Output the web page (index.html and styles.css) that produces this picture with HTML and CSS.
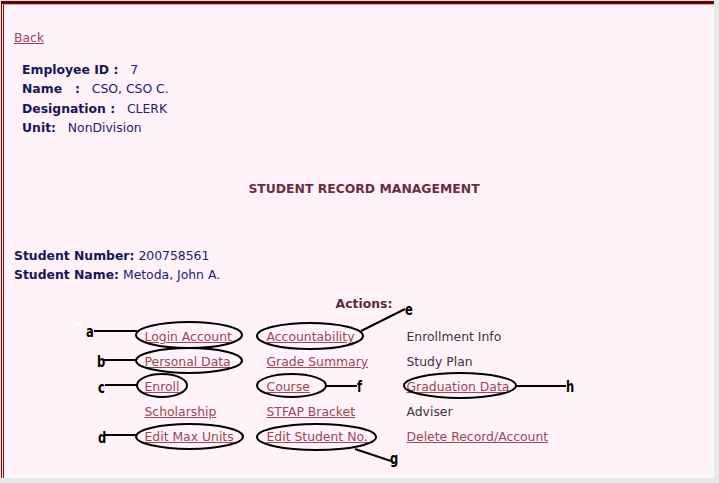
FILE: index.html
```html
<!DOCTYPE html>
<html>
<head>
<meta charset="utf-8">
<title>Student Record Management</title>
<link rel="stylesheet" href="styles.css">
</head>
<body>
<div class="frame">
  <div class="panel">
    <div class="content">
      <a class="link back" href="#">Back</a>
      <div class="info">
        <div><b>Employee ID :</b>&nbsp;&nbsp; 7</div>
        <div><b>Name &nbsp; :</b>&nbsp;&nbsp; CSO, CSO C.</div>
        <div><b>Designation :</b>&nbsp;&nbsp; CLERK</div>
        <div><b>Unit:</b>&nbsp;&nbsp; NonDivision</div>
      </div>
      <div class="heading">STUDENT RECORD MANAGEMENT</div>
      <div class="student">
        <div><b>Student Number:</b> 200758561</div>
        <div><b>Student Name:</b> Metoda, John A.</div>
      </div>
      <div class="actions-title">Actions:</div>
      <div class="actions">
        <a class="link" href="#">Login Account</a>
        <a class="link" href="#">Accountability</a>
        <span class="plain">Enrollment Info</span>
        <a class="link" href="#">Personal Data</a>
        <a class="link" href="#">Grade Summary</a>
        <span class="plain">Study Plan</span>
        <a class="link" href="#">Enroll</a>
        <a class="link" href="#">Course</a>
        <a class="link" href="#">Graduation Data</a>
        <a class="link" href="#">Scholarship</a>
        <a class="link" href="#">STFAP Bracket</a>
        <span class="plain">Adviser</span>
        <a class="link" href="#">Edit Max Units</a>
        <a class="link" href="#">Edit Student No.</a>
        <a class="link" href="#">Delete Record/Account</a>
      </div>
    </div>
  </div>
</div>
<svg class="notes" width="719" height="483" viewBox="0 0 719 483">
  <g fill="none" stroke="#000" stroke-width="2">
    <ellipse cx="189" cy="335" rx="53" ry="13"/>
    <ellipse cx="189" cy="360.5" rx="53" ry="12.5"/>
    <ellipse cx="162" cy="385.5" rx="25" ry="11.5"/>
    <ellipse cx="189.5" cy="436.5" rx="53.5" ry="12.5"/>
    <ellipse cx="310" cy="336" rx="53" ry="13"/>
    <ellipse cx="291.5" cy="385.5" rx="34.5" ry="11.5"/>
    <ellipse cx="316.5" cy="437" rx="59.5" ry="13"/>
    <ellipse cx="460" cy="385.5" rx="56" ry="12.5"/>
    <line x1="94" y1="331" x2="137" y2="331"/>
    <line x1="104" y1="360" x2="137" y2="360"/>
    <line x1="105" y1="385" x2="137" y2="385"/>
    <line x1="104" y1="435" x2="137" y2="435"/>
    <line x1="361" y1="331" x2="405" y2="309"/>
    <line x1="326" y1="386" x2="357" y2="386"/>
    <line x1="355" y1="449" x2="391" y2="461"/>
    <line x1="515" y1="386" x2="566" y2="386"/>
  </g>
  <rect x="76" y="322" width="5" height="5" fill="#fff"/>
  <g class="tag">
    <text x="86" y="337">a</text>
    <text x="97" y="367">b</text>
    <text x="98" y="393">c</text>
    <text x="98" y="443">d</text>
    <text x="405" y="315">e</text>
    <text x="357" y="392">f</text>
    <text x="390" y="464">g</text>
    <text x="566" y="392">h</text>
  </g>
</svg>
</body>
</html>
```
FILE: styles.css
```css
html, body {
  margin: 0;
  padding: 0;
}
body {
  background: #e2ece8;
  position: relative;
  width: 719px;
  height: 483px;
  overflow: hidden;
  font-family: "DejaVu Sans", Verdana, sans-serif;
  font-size: 12.4px;
}
.frame {
  box-sizing: border-box;
  margin: 1px 0 0 1px;
  width: 713px;
  height: 477px;
  border-top: 3px solid #660000;
  border-left: 1px solid #8a0000;
  background: #fff2f8;
}
.panel {
  box-sizing: border-box;
  height: 100%;
  margin-left: 1px;
  border-top: 1px solid #f0a0ac;
  border-left: 1px solid #990000;
}
.content {
  padding-left: 10px;
  display: flex;
  flex-direction: column;
  line-height: 15px;
}
.link {
  color: #9a4854;
  text-decoration: underline;
}
.back {
  align-self: flex-start;
  margin-top: 25px;
}
.info {
  margin-top: 15px;
  margin-left: 8px;
  color: #1c1c6e;
  line-height: 19.3px;
}
.info b, .student b {
  color: #15155a;
}
.heading {
  margin-top: 44px;
  text-align: center;
  font-weight: bold;
  color: #6b2d3d;
}
.student {
  margin-top: 50px;
  color: #1c1c6e;
  line-height: 19px;
}
.actions-title {
  margin-top: 12px;
  text-align: center;
  font-weight: bold;
  color: #5e2a3a;
}
.actions {
  margin-top: 13px;
  display: grid;
  grid-template-columns: 122px 140px 177px;
  grid-auto-rows: 25px;
  justify-content: center;
  align-items: center;
}
.actions > * {
  justify-self: start;
  line-height: 15px;
}
.plain {
  color: #3c3434;
}
.notes {
  position: absolute;
  top: 0;
  left: 0;
  pointer-events: none;
}
.tag text {
  font-family: "Liberation Sans Narrow", "DejaVu Sans Condensed", "Liberation Sans", sans-serif;
  font-weight: bold;
  font-size: 16px;
  fill: #000;
  transform-box: fill-box;
  transform-origin: left center;
  transform: scaleX(0.8);
}
```
